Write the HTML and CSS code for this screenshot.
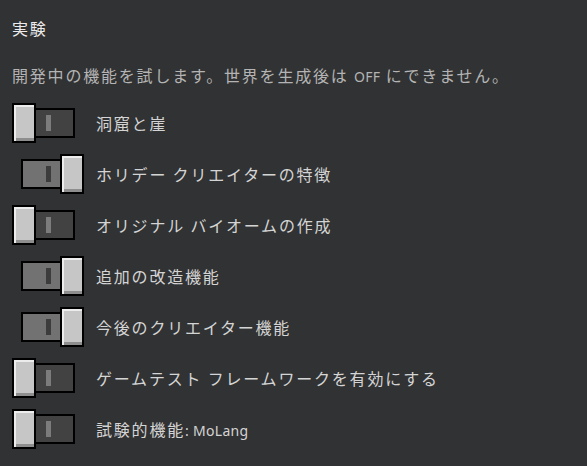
FILE: index.html
```html
<!DOCTYPE html>
<html lang="ja">
<head>
    <meta charset="UTF-8">
    <meta name="viewport" content="width=device-width, initial-scale=1.0">
    <title>実験</title>
    <link rel="stylesheet" href="styles.css">
</head>
<body>
    <div class="panel">
        <h2 class="title">実験</h2>
        <p class="desc">開発中の機能を試します。世界を生成後は <span class="latin">OFF</span> にできません。</p>

        <div class="option">
            <div class="switch">
                <div class="toggle off"><div class="knob"></div><div class="track"><i class="mark"></i></div></div>
            </div>
            <span class="label">洞窟と崖</span>
        </div>
        <div class="option">
            <div class="switch">
                <div class="toggle on"><div class="track"><i class="mark"></i></div><div class="knob"></div></div>
            </div>
            <span class="label">ホリデー クリエイターの特徴</span>
        </div>
        <div class="option">
            <div class="switch">
                <div class="toggle off"><div class="knob"></div><div class="track"><i class="mark"></i></div></div>
            </div>
            <span class="label">オリジナル バイオームの作成</span>
        </div>
        <div class="option">
            <div class="switch">
                <div class="toggle on"><div class="track"><i class="mark"></i></div><div class="knob"></div></div>
            </div>
            <span class="label">追加の改造機能</span>
        </div>
        <div class="option">
            <div class="switch">
                <div class="toggle on"><div class="track"><i class="mark"></i></div><div class="knob"></div></div>
            </div>
            <span class="label">今後のクリエイター機能</span>
        </div>
        <div class="option">
            <div class="switch">
                <div class="toggle off"><div class="knob"></div><div class="track"><i class="mark"></i></div></div>
            </div>
            <span class="label">ゲームテスト フレームワークを有効にする</span>
        </div>
        <div class="option">
            <div class="switch">
                <div class="toggle off"><div class="knob"></div><div class="track"><i class="mark"></i></div></div>
            </div>
            <span class="label">試験的機能<span class="latin">: MoLang</span></span>
        </div>
    </div>
</body>
</html>
```

FILE: styles.css
```css
body {
    margin: 0;
    padding: 0;
    background-color: #313233;
    font-family: "Noto Sans CJK JP", "Noto Sans", sans-serif;
    width: 587px;
    height: 466px;
    overflow: hidden;
}
.panel {
    padding: 0 12px;
}
.title {
    margin: 0;
    padding-top: 18px;
    font-size: 16px;
    font-weight: normal;
    line-height: 20px;
    letter-spacing: 1.8px;
    color: #ececec;
}
.desc {
    margin: 27px 0 10px;
    font-size: 16px;
    line-height: 20px;
    letter-spacing: 1.8px;
    color: #b4b4b4;
}
.latin {
    font-family: "Noto Sans", sans-serif;
    font-size: 14px;
    letter-spacing: 0.3px;
}
.option {
    display: flex;
    align-items: center;
    height: 51px;
}
.switch {
    width: 84px;
    flex-shrink: 0;
}
.label {
    font-size: 16px;
    letter-spacing: 1.8px;
    color: #d4d4d4;
}
.toggle {
    display: flex;
    align-items: center;
}
.toggle.on {
    margin-left: 9px;
}
.knob {
    width: 20px;
    height: 36px;
    border: 2px solid #000;
    background-color: #c6c6c6;
    box-shadow: inset 2px 2px 0 #ececec, inset 0 -3px 0 #8e8e8e;
    position: relative;
    z-index: 1;
}
.track {
    width: 37px;
    height: 26px;
    border: 2px solid #000;
    display: flex;
    align-items: center;
}
.off .track {
    margin-left: -2px;
    background-color: #424242;
}
.on .track {
    margin-right: -2px;
    background-color: #727272;
}
.mark {
    display: block;
    width: 5px;
    height: 16px;
}
.off .mark {
    margin-left: 10px;
    background-color: #7c7c7c;
}
.on .mark {
    margin-left: 23px;
    background-color: #3c3c3c;
}
```
